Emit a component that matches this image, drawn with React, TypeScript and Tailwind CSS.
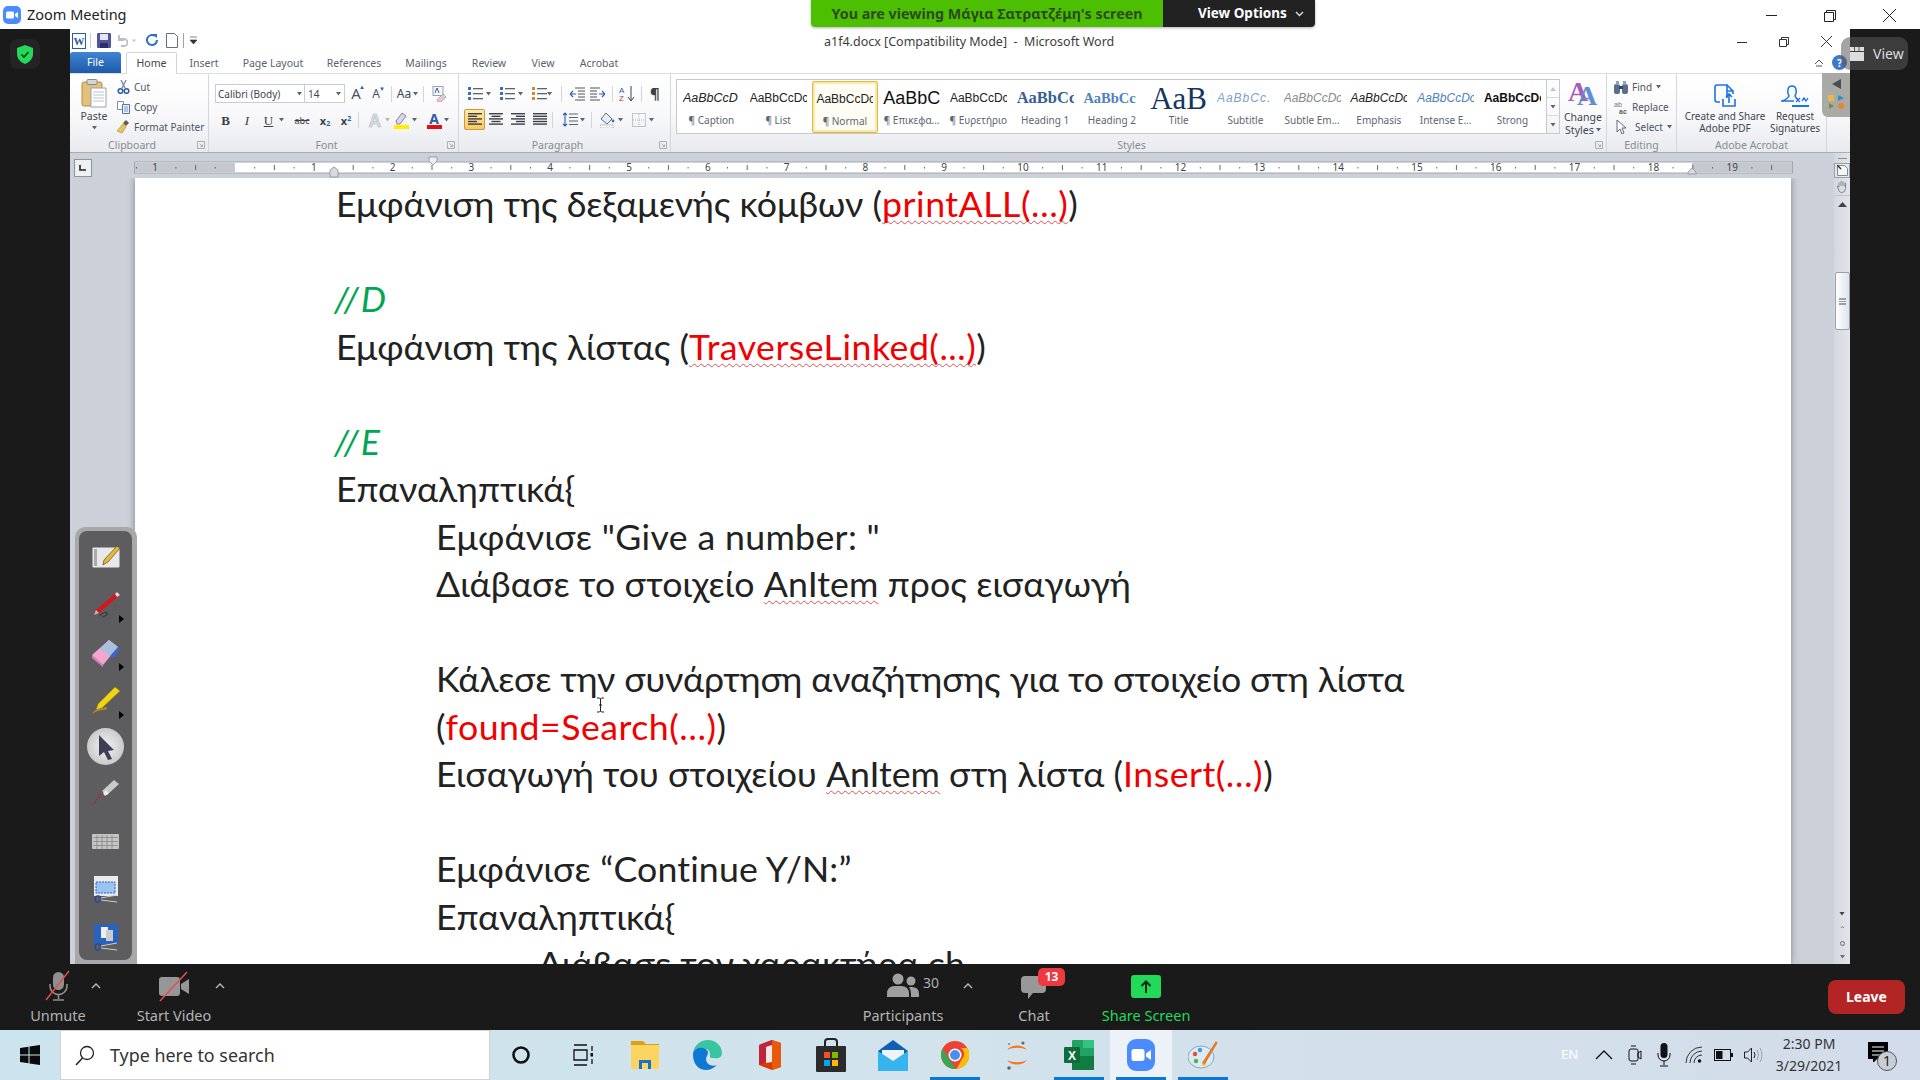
import React from "react";

const C = ({ w = 5, c = "#5a6472" }: { w?: number; c?: string }) => (
  <svg width={w} height="4" viewBox="0 0 5 4" className="shrink-0"><path d="M0 0h5L2.5 3.5z" fill={c} /></svg>
);

const Tab = ({ t, cls }: { t: string; cls: string }) => (
  <div className={`h-[21px] pt-[1px] text-center text-[#59626e] ${cls}`}>{t}</div>
);

const Sep = ({ cls = "h-[18px]" }: { cls?: string }) => <div className={`w-px bg-[#d2d5da] shrink-0 ${cls}`} />;

const Lines = ({ kind }: { kind: "l" | "c" | "r" | "j" }) => {
  const rows = [0, 1, 2, 3, 4];
  return (
    <svg width="14" height="13" viewBox="0 0 14 13">
      {rows.map((i) => {
        const short = i % 2 === 1 && kind !== "j";
        const w = short ? 9 : 14;
        const x = kind === "l" || kind === "j" ? 0 : kind === "c" ? 2.5 : 5;
        return <rect key={i} x={short ? x : 0} y={i * 2.6} width={w} height="1.4" fill="#3b4048" />;
      })}
    </svg>
  );
};

const ListIcon = ({ marker }: { marker: string }) => (
  <svg width="15" height="15" viewBox="0 0 15 15">
    {[1, 6, 11].map((y) => (
      <g key={y}>
        <rect x="0" y={y} width="3" height="3" fill={marker} />
        <rect x="5" y={y + 1} width="10" height="1.3" fill="#5b6470" />
      </g>
    ))}
  </svg>
);

const Style = ({ p, l, cls, sel }: { p: string; l: string; cls: string; sel?: boolean }) => (
  <div className={`w-[66.75px] h-[52px] flex flex-col items-center overflow-hidden shrink-0 ${sel ? "border border-[#e2b64c] bg-[#fffdf3] rounded-[2px] shadow-[inset_0_0_0_2px_#fbe9a6]" : ""}`}>
    <div className={`h-[32px] w-[57px] flex items-center overflow-hidden whitespace-nowrap pt-[3px] ${cls}`}>{p}</div>
    <div className="text-[10px] leading-[14px] text-[#5d6570] whitespace-nowrap">{l}</div>
  </div>
);

const Group = ({ label, cls, children, launcher = true, labelCls = "" }: { label: string; cls: string; children: React.ReactNode; launcher?: boolean; labelCls?: string }) => (
  <div className={`flex flex-col border-r border-[#d3d6db] shrink-0 ${cls}`}>
    <div className="h-[62px] flex flex-col relative">{children}</div>
    <div className="h-[16px] flex items-center relative pt-[3px]">
      <div className={`flex-1 text-center text-[10.5px] text-[#878c93] ${launcher ? "pr-[14px]" : ""} ${labelCls}`}>{label}</div>
      {launcher && (
        <svg width="8" height="8" viewBox="0 0 8 8" className="absolute right-[3px] top-[5px]"><path d="M0.5 0.5h7v7h-7zM2.5 2.5l3 3M5.5 3.5v2h-2" fill="none" stroke="#9aa0a8" strokeWidth="0.8" /></svg>
      )}
    </div>
  </div>
);

const Ribbon = () => (
  <div className="h-[80px] flex bg-gradient-to-b from-white via-[#f9f9fb] to-[#e8eaee] border-t border-[#dcdddf] border-b border-b-[#a9adb3] text-[#4c5561] text-[10px] leading-none font-['Noto_Sans']">
    <Group label="Clipboard" cls="w-[139px]">
      <div className="flex h-full">
        <div className="w-[46px] flex flex-col items-center pt-[5px] pl-[2px]">
          <svg width="26" height="29" viewBox="0 0 26 29">
            <rect x="1" y="3" width="20" height="24" rx="2" fill="#e4c07b" stroke="#b58b45" />
            <rect x="6" y="0.5" width="10" height="5" rx="1" fill="#d5d5d5" stroke="#8b8b8b" />
            <path d="M10 9h15v19H10z" fill="#fff" stroke="#9aa2ad" />
            <path d="M12 13h11M12 16h11M12 19h11M12 22h11" stroke="#b9c4d2" />
          </svg>
          <div className="text-[10.5px] mt-[3px] text-[#3e4650]">Paste</div>
          <div className="mt-[4px]"><C /></div>
        </div>
        <div className="flex flex-col pt-[6px] gap-[6px] ml-[1px]">
          <div className="flex items-center gap-[4px] h-[14px]">
            <svg width="13" height="14" viewBox="0 0 13 14"><path d="M4 0l4 8M9 0L5 8" stroke="#7d8da5" strokeWidth="1.4" /><circle cx="3.5" cy="11" r="2.3" fill="none" stroke="#2f5fa8" strokeWidth="1.6" /><circle cx="9.5" cy="11" r="2.3" fill="none" stroke="#2f5fa8" strokeWidth="1.6" /></svg>
            <span>Cut</span>
          </div>
          <div className="flex items-center gap-[4px] h-[14px]">
            <svg width="13" height="13" viewBox="0 0 13 13"><path d="M0.5 0.5h6v8h-6z" fill="#fff" stroke="#7b8da8" /><path d="M5.5 3.5h7v9h-7z" fill="#eaf1fa" stroke="#4f77ad" /><path d="M7 6h4M7 8h4M7 10h4" stroke="#7b9bc8" /></svg>
            <span>Copy</span>
          </div>
          <div className="flex items-center gap-[4px] h-[14px]">
            <svg width="13" height="14" viewBox="0 0 13 14"><path d="M9 0l3 3-3 3-3-3z" fill="#6b5a3a" /><path d="M6 4l3 3-4 6-5-2z" fill="#e8c65a" stroke="#a58a35" strokeWidth="0.6" /></svg>
            <span className="whitespace-nowrap">Format Painter</span>
          </div>
        </div>
      </div>
    </Group>

    <Group label="Font" cls="w-[250px]">
      <div className="flex items-center h-[19px] mt-[10px] ml-[6px]">
        <div className="w-[90px] h-[19px] bg-white border border-[#c9cdd3] flex items-center justify-between px-[2px]">
          <span className="text-[#3e4650]">Calibri (Body)</span><C />
        </div>
        <div className="w-[40px] h-[19px] bg-white border border-l-0 border-[#c9cdd3] flex items-center justify-between px-[3px]">
          <span className="text-[#3e4650]">14</span><C />
        </div>
        <div className="w-[20px] ml-[1px] text-center text-[15px] text-[#4a5360] relative">A<span className="absolute right-[1px] top-[-2px] text-[6px] text-[#2b5fae]">▲</span></div>
        <div className="w-[20px] text-center text-[12px] text-[#4a5360] relative">A<span className="absolute right-[1px] top-[-2px] text-[6px] text-[#2b5fae]">▼</span></div>
        <Sep cls="h-[16px] ml-[5px]" />
        <div className="w-[31px] flex items-center justify-center gap-[2px] text-[12px] text-[#3e4650]">Aa<C /></div>
        <Sep cls="h-[16px]" />
        <div className="w-[30px] flex justify-center">
          <svg width="15" height="16" viewBox="0 0 15 16"><rect x="1" y="0.5" width="10" height="9" fill="#f4f6f9" stroke="#9aa2ad" /><path d="M3 7l2-5 2 5" fill="none" stroke="#2b5fae" /><path d="M5 14l6-6 3 3-5 5H6z" fill="#ecc6cf" stroke="#8b8fa0" strokeWidth="0.6" /></svg>
        </div>
      </div>
      <div className="flex items-center h-[20px] mt-[7px] ml-[6px] text-[#3a4049]">
        <div className="w-[21px] text-center font-['Liberation_Serif'] font-bold text-[13px]">B</div>
        <div className="w-[22px] text-center font-['Liberation_Serif'] italic text-[13px]">I</div>
        <div className="w-[21px] text-center font-['Liberation_Serif'] underline text-[13px]">U</div>
        <C />
        <div className="w-[24px] ml-[6px] text-center text-[9px] line-through">abc</div>
        <div className="w-[22px] text-center text-[11px] font-bold">x<sub className="text-[7px] text-[#2b5fae]">2</sub></div>
        <div className="w-[20px] text-center text-[11px] font-bold">x<sup className="text-[7px] text-[#2b5fae]">2</sup></div>
        <Sep cls="h-[16px] ml-[2px]" />
        <div className="w-[20px] ml-[6px] text-center text-[17px] font-bold text-[#d8dadd] [-webkit-text-stroke:0.5px_#b5b8bd]">A</div>
        <C c="#b5b8bd" />
        <svg width="16" height="18" viewBox="0 0 16 18" className="ml-[4px]"><path d="M2 10l6-8 4 3-6 8H3z" fill="#d5d9e0" stroke="#7a5ea8" strokeWidth="0.8" /><rect x="0" y="14" width="15" height="4" fill="#fff000" /></svg>
        <div className="ml-[2px]"><C /></div>
        <div className="w-[20px] ml-[7px] flex flex-col items-center">
          <span className="text-[14px] leading-[13px] font-bold text-[#2d5ca8]">A</span>
          <span className="w-[15px] h-[4px] bg-[#e01010]" />
        </div>
        <C />
      </div>
    </Group>

    <Group label="Paragraph" cls="w-[212px]">
      <div className="flex items-center h-[19px] mt-[10px] ml-[9px]">
        <ListIcon marker="#3f70b5" /><div className="ml-[3px] mr-[9px]"><C /></div>
        <ListIcon marker="#3f70b5" /><div className="ml-[3px] mr-[9px]"><C /></div>
        <ListIcon marker="#d08a2a" /><C />
        <Sep cls="h-[16px] ml-[9px]" />
        <div className="ml-[8px] flex gap-[5px]">
          <svg width="15" height="14" viewBox="0 0 15 14"><path d="M5 1h10M8 4h7M8 7h7M8 10h7M5 13h10" stroke="#4c5561" /><path d="M6 7H0M3 4L0 7l3 3" fill="none" stroke="#2b5fae" strokeWidth="1.2" /></svg>
          <svg width="15" height="14" viewBox="0 0 15 14"><path d="M0 1h10M0 4h7M0 7h7M0 10h7M0 13h10" stroke="#4c5561" /><path d="M9 7h6M12 4l3 3-3 3" fill="none" stroke="#2b5fae" strokeWidth="1.2" /></svg>
        </div>
        <Sep cls="h-[16px] ml-[7px]" />
        <svg width="16" height="17" viewBox="0 0 16 17" className="ml-[6px]"><text x="0" y="8" fontSize="8" fill="#2b5fae" fontFamily="Liberation Sans">A</text><text x="0" y="16" fontSize="8" fill="#c0392b" fontFamily="Liberation Sans">Z</text><path d="M12 1v14M9 12l3 4 3-4" fill="none" stroke="#3a4049" /></svg>
        <Sep cls="h-[16px] ml-[6px]" />
        <div className="ml-[8px] text-[15px] font-bold text-[#3a4049]">¶</div>
      </div>
      <div className="flex items-center h-[21px] mt-[6px] ml-[5px]">
        <div className="w-[21px] h-[21px] rounded-[2px] border border-[#c69a3e] bg-gradient-to-b from-[#ffe9a8] to-[#fbc95f] flex items-center justify-center"><Lines kind="l" /></div>
        <div className="w-[22px] flex justify-center"><Lines kind="c" /></div>
        <div className="w-[22px] flex justify-center"><Lines kind="r" /></div>
        <div className="w-[22px] flex justify-center"><Lines kind="j" /></div>
        <Sep cls="h-[16px] ml-[1px]" />
        <div className="ml-[9px] flex items-center gap-[2px]">
          <svg width="16" height="15" viewBox="0 0 16 15"><path d="M3 1v13M1 3l2-2 2 2M1 12l2 2 2-2" fill="none" stroke="#2b5fae" strokeWidth="1.1" /><path d="M7 2h9M7 5.5h9M7 9h9M7 12.5h9" stroke="#5b6470" /></svg>
          <C />
        </div>
        <Sep cls="h-[16px] ml-[6px]" />
        <div className="ml-[8px] flex items-center gap-[3px]">
          <svg width="15" height="16" viewBox="0 0 15 16"><path d="M6 1l6 6-5 5-6-5z" fill="#e8edf4" stroke="#5b6f8c" /><rect x="0" y="13" width="13" height="3" fill="#fff" stroke="#9aa2ad" strokeWidth="0.6" /><circle cx="13" cy="9" r="1.4" fill="#3f70b5" /></svg>
          <C />
        </div>
        <div className="ml-[9px] flex items-center gap-[3px]">
          <svg width="14" height="14" viewBox="0 0 14 14"><rect x="0.5" y="0.5" width="13" height="13" fill="none" stroke="#8d939b" strokeDasharray="1 1" /><path d="M7 1v12M1 7h12" stroke="#b3b7bd" strokeDasharray="1 1" /></svg>
          <C />
        </div>
      </div>
    </Group>

    <Group label="Styles" cls="w-[936px] pl-[5px]" labelCls="pr-[19px]">
      <div className="flex h-full">
        <div className="mt-[5px] h-[55px] border border-[#c6cad0] bg-white flex items-center pl-[1px] w-[871px] shrink-0">
          <Style p="AaBbCcD" l="¶ Caption" cls="text-[12.5px] italic text-[#222] font-['Liberation_Sans']" />
          <Style p="AaBbCcDc" l="¶ List" cls="text-[12px] text-[#222] font-['Liberation_Sans']" />
          <Style p="AaBbCcDc" l="¶ Normal" cls="text-[12px] text-[#222] font-['Liberation_Sans']" sel />
          <Style p="AaBbC" l="¶ Επικεφα..." cls="text-[18px] text-[#111] font-['Liberation_Sans']" />
          <Style p="AaBbCcDc" l="¶ Ευρετήριο" cls="text-[12px] text-[#222] font-['Liberation_Sans']" />
          <Style p="AaBbCc" l="Heading 1" cls="text-[16.5px] font-bold text-[#365f91] font-['Liberation_Serif']" />
          <Style p="AaBbCc" l="Heading 2" cls="text-[14.5px] font-bold text-[#4f81bd] font-['Liberation_Serif']" />
          <Style p="AaB" l="Title" cls="text-[31px] text-[#17365d] font-['Liberation_Serif']" />
          <Style p="AaBbCc." l="Subtitle" cls="text-[12px] italic tracking-[1px] text-[#7f9fc9] font-['Liberation_Sans']" />
          <Style p="AaBbCcDc" l="Subtle Em..." cls="text-[12px] italic text-[#8a8a8a] font-['Liberation_Sans']" />
          <Style p="AaBbCcDc" l="Emphasis" cls="text-[12px] italic text-[#222] font-['Liberation_Sans']" />
          <Style p="AaBbCcDc" l="Intense E..." cls="text-[12px] italic text-[#4f81bd] font-['Liberation_Sans']" />
          <Style p="AaBbCcDc" l="Strong" cls="text-[12px] font-bold text-[#111] font-['Liberation_Sans']" />
        </div>
        <div className="mt-[5px] h-[55px] w-[13px] border border-l-0 border-[#c6cad0] flex flex-col">
          <div className="h-[18px] flex items-center justify-center border-b border-[#d6d9de]"><svg width="6" height="4"><path d="M0 4h6L3 0z" fill="#c3c7cd" /></svg></div>
          <div className="h-[18px] flex items-center justify-center border-b border-[#d6d9de]"><C w={6} /></div>
          <div className="flex-1 flex items-center justify-center"><C w={6} /></div>
        </div>
        <div className="w-[47px] flex flex-col items-center pt-[4px]">
          <svg width="30" height="29" viewBox="0 0 30 29"><text x="0" y="23" fontSize="28" fontWeight="bold" fill="#a85cb8" fontFamily="Liberation Serif">A</text><text x="9" y="27" fontSize="28" fontWeight="bold" fill="#5f8fd0" fontFamily="Liberation Serif">A</text></svg>
          <div className="text-[10.5px] mt-[5px] text-[#3e4650]">Change</div>
          <div className="text-[10.5px] mt-[2px] text-[#3e4650] flex items-center gap-[2px]">Styles<C /></div>
        </div>
      </div>
    </Group>

    <Group label="Editing" cls="w-[70px]" launcher={false}>
      <div className="flex flex-col pt-[6px] pl-[7px] gap-[6px]">
        <div className="flex items-center gap-[4px] h-[14px]">
          <svg width="14" height="13" viewBox="0 0 14 13"><rect x="0" y="3" width="6" height="10" rx="2" fill="#5a6f8f" /><rect x="8" y="3" width="6" height="10" rx="2" fill="#5a6f8f" /><rect x="2" y="0" width="3" height="4" fill="#8da2c0" /><rect x="9" y="0" width="3" height="4" fill="#8da2c0" /><rect x="5" y="5" width="4" height="3" fill="#3a4658" /></svg>
          <span>Find</span><C />
        </div>
        <div className="flex items-center gap-[4px] h-[14px]">
          <svg width="14" height="13" viewBox="0 0 14 13"><text x="0" y="6" fontSize="7" fill="#6b7480" fontFamily="Liberation Sans">ab</text><text x="5" y="13" fontSize="7" fontWeight="bold" fill="#4a6a4a" fontFamily="Liberation Sans">ac</text></svg>
          <span>Replace</span>
        </div>
        <div className="flex items-center gap-[7px] h-[14px]">
          <svg width="14" height="14" viewBox="0 0 14 14"><path d="M3 0v12l3-3 2 5 2-1-2-5h4z" fill="#fff" stroke="#4a5a70" strokeWidth="0.9" /></svg>
          <span className="-mr-[3px]">Select</span><C />
        </div>
      </div>
    </Group>

    <Group label="Adobe Acrobat" cls="w-[150px]" launcher={false}>
      <div className="flex h-full pl-[7px]">
        <div className="w-[82px] flex flex-col items-center pt-[10px]">
          <svg width="22" height="24" viewBox="0 0 22 24"><path d="M13 14V1H3a2 2 0 0 0-2 2v13a2 2 0 0 0 2 2h3M13 1l6 6v3M13 1v6h6" fill="none" stroke="#1a73e8" strokeWidth="1.6" /><path d="M9 15v7h12v-7M15 19v-9M12 13l3-3 3 3" fill="none" stroke="#1a73e8" strokeWidth="1.6" /></svg>
          <div className="text-[10px] mt-[3px] whitespace-nowrap text-[#3e4650]">Create and Share</div>
          <div className="text-[10px] mt-[2px] text-[#3e4650]">Adobe PDF</div>
        </div>
        <div className="w-[58px] flex flex-col items-center pt-[10px]">
          <svg width="30" height="24" viewBox="0 0 30 24"><path d="M2 17c4-1 6-3 7-5-2-3-2-10 3-10s5 7 3 10c1 2 2 3 3 3" fill="none" stroke="#1a73e8" strokeWidth="1.5" /><path d="M1 17h13M16 14l4 4M20 14l-4 4M22 17l2-3 2 3 2-3" fill="none" stroke="#1a73e8" strokeWidth="1.3" /><rect x="12" y="21" width="17" height="2" fill="#1a73e8" /></svg>
          <div className="text-[10px] mt-[3px] text-[#3e4650]">Request</div>
          <div className="text-[10px] mt-[2px] text-[#3e4650]">Signatures</div>
        </div>
      </div>
    </Group>
    <div className="flex-1 relative">
      <div className="absolute left-[-5px] top-[-1px] w-[28px] h-[44px] bg-[#a9aaa5] rounded-bl-[6px] flex flex-col items-center pt-[6px] gap-[5px]">
        <svg width="9" height="10"><path d="M9 0v10L0 5z" fill="#4a4d50" /></svg>
        <svg width="18" height="16" viewBox="0 0 18 16"><rect x="1" y="1" width="6" height="6" fill="#e6b84a" /><path d="M11 1l6 3-6 3z" fill="#2f8fc4" /><path d="M2 9l5 3-5 3z" fill="#7d8a3a" /><circle cx="14" cy="12" r="3" fill="#e8862a" /></svg>
      </div>
    </div>
  </div>
);

const Ruler = () => {
  const nums = Array.from({ length: 19 }, (_, i) => i + 1);
  const ticks = Array.from({ length: 84 }, (_, i) => i);
  return (
    <div className="h-[25px] bg-[#ccd1d9] flex items-start">
      <div className="w-[18px] h-[18px] ml-[4px] mt-[6px] border border-[#8f949b] bg-[#eef0f3] flex items-center justify-center shrink-0">
        <svg width="8" height="8"><path d="M1 1v5h6" fill="none" stroke="#222" strokeWidth="1.6" /></svg>
      </div>
      <svg width="1659" height="25" viewBox="0 0 1659 25" className="ml-[42px] shrink-0">
        <rect x="0.5" y="9" width="1658" height="11" fill="#fff" stroke="#a2a7ae" />
        <rect x="1" y="9.5" width="100" height="10" fill="#c5c9cf" />
        <rect x="1558" y="9.5" width="100" height="10" fill="#c5c9cf" />
        {ticks.map((i) => {
          const x = 2 + i * 19.7;
          const t = i % 4;
          if (t === 1) return null;
          return t === 3 ? <rect key={i} x={x} y="12" width="1" height="5" fill="#666" /> : <rect key={i} x={x} y="14" width="1" height="1.5" fill="#666" />;
        })}
        <text x="21" y="18" fontSize="10" fill="#444" textAnchor="middle" fontFamily="Noto Sans">1</text>
        {nums.map((n) => (
          <text key={n} x={101 + n * 78.8} y="18" fontSize="10" fill="#444" textAnchor="middle" fontFamily="Noto Sans">{n}</text>
        ))}
        <path d="M200 14l4 3v7h-8v-7z" fill="#d7dadf" stroke="#8c9097" strokeWidth="0.8" />
        <path d="M295 4h8v4l-4 4-4-4z" fill="#eceef1" stroke="#8c9097" strokeWidth="0.8" />
        <path d="M1558 15l4 4v2h-8v-2z" fill="#d7dadf" stroke="#8c9097" strokeWidth="0.8" />
      </svg>
    </div>
  );
};

const Sq = ({ children }: { children: React.ReactNode }) => (
  <span className="underline decoration-wavy decoration-[#e05050] decoration-1 underline-offset-[3px] [text-decoration-skip-ink:none]">{children}</span>
);
const R = ({ children }: { children: React.ReactNode }) => <span className="text-[#f00000] tracking-[0.5px]">{children}</span>;
const G = ({ children }: { children: React.ReactNode }) => <div className="h-[47.5px] italic text-[#00a651] tracking-[2px] -ml-[2px]">{children}</div>;
const L = ({ children, cls = "" }: { children?: React.ReactNode; cls?: string }) => <div className={`h-[47.5px] whitespace-nowrap ${cls}`}>{children}</div>;

const Doc = () => (
  <div className="flex-1 bg-[#ccd1d9] flex overflow-hidden pl-[65px] pr-[43px]">
    <div className="flex-1 bg-white shadow-[0_0_7px_rgba(60,60,70,0.55)] pl-[201px] pt-[2px] text-[#222] text-[35.7px] leading-[47.5px] font-['Lato','Noto_Sans',sans-serif] relative">
      <L>Εμφάνιση της δεξαμενής κόμβων (<R><Sq>printALL(…)</Sq></R>)</L>
      <L />
      <G>//D</G>
      <L>Εμφάνιση της λίστας (<R><Sq>TraverseLinked(...)</Sq></R>)</L>
      <L />
      <G>//E</G>
      <L>Επαναληπτικά{"{"}</L>
      <L cls="pl-[100px] tracking-[0.33px]">Εμφάνισε "Give a number: "</L>
      <L cls="pl-[100px] tracking-[0.1px]">Διάβασε το στοιχείο <Sq>AnItem</Sq> προς εισαγωγή</L>
      <L />
      <L cls="pl-[100px] tracking-[-0.13px]">Κάλεσε την συνάρτηση αναζήτησης για το στοιχείο στη λίστα</L>
      <L cls="pl-[100px]">(<R>found=Search(…)</R>)</L>
      <L cls="pl-[100px]">Εισαγωγή του στοιχείου <Sq>AnItem</Sq> στη λίστα (<R>Insert(…)</R>)</L>
      <L />
      <L cls="pl-[100px] tracking-[0.15px]">Εμφάνισε “Continue Y/N:”</L>
      <L cls="pl-[100px]">Επαναληπτικά{"{"}</L>
      <L cls="pl-[202px]">Διάβασε τον χαρακτήρα ch</L>
      <svg width="9" height="16" viewBox="0 0 9 16" className="absolute left-[461px] top-[519px]"><path d="M1 1h2.5l1 1 1-1H8M4.5 2v12M1 15h2.5l1-1 1 1H8M3 8h3" fill="none" stroke="#222" strokeWidth="1" /></svg>
    </div>
  </div>
);

const Scrollbar = () => (
  <div className="w-[16px] bg-[#d9dde3] flex flex-col items-center shrink-0 bg-gradient-to-r from-[#d4d8de] to-[#e2e5ea]">
    <div className="h-[10px] w-full flex items-center justify-center"><div className="w-[9px] h-px bg-[#8b9098]" /></div>
    <div className="h-[15px] w-[16px] border border-[#9aa0a8] bg-[#e4e6ea] flex items-center justify-center">
      <svg width="11" height="11" viewBox="0 0 11 11"><path d="M0.5 0.5h7l3 3v7h-10z" fill="#f4f5f6" stroke="#888" /><path d="M0 0l4 4" stroke="#333" strokeWidth="1.4" /></svg>
    </div>
    <div className="h-[17px] flex items-center">
      <svg width="12" height="13" viewBox="0 0 12 13"><path d="M3 7V2.5M5 6V1M7 6V1.3M9 7V2.5M3 7L1.3 6 3 11q1 1.5 3 1.5 3.5 0 3.5-4V3" fill="none" stroke="#858a92" strokeWidth="1" /></svg>
    </div>
    <div className="h-px w-full bg-[#c3c7cd]" />
    <div className="h-[16px] flex items-center"><svg width="9" height="5"><path d="M0 5h9L4.5 0z" fill="#3e4248" /></svg></div>
    <div className="h-[60px]" />
    <div className="w-[15px] h-[58px] border border-[#9aa0a8] rounded-[2px] bg-gradient-to-r from-white to-[#dfe3ea] flex items-center justify-center">
      <div className="w-[7px] h-[7px] border-y-2 border-[#9aa0a8] relative after:absolute after:left-0 after:right-0 after:top-[1px] after:h-px after:bg-[#9aa0a8]" />
    </div>
    <div className="flex-1" />
    <div className="h-[17px] flex items-center"><C w={6} c="#3e4248" /></div>
    <div className="h-[14px] flex items-center text-[8px] leading-none text-[#6a6f77]">⌃</div>
    <div className="h-[14px] flex items-center"><div className="w-[5px] h-[5px] rounded-full border border-[#6a6f77]" /></div>
    <div className="h-[14px] flex items-center"><C w={5} c="#6a6f77" /></div>
  </div>
);

const Tb = ({ children, sel, under }: { children: React.ReactNode; sel?: boolean; under?: boolean }) => (
  <div className={`w-[62px] h-[50px] shrink-0 relative flex items-center justify-center ${sel ? "bg-[#ecf2f8]" : ""}`}>
    {children}
    {under && <div className="absolute bottom-0 left-[6px] right-[6px] h-[3px] bg-[#0a78d4]" />}
  </div>
);

const BarBtn = ({ label, cls, children, text = "text-[#b3b3b3]" }: { label: string; cls: string; children: React.ReactNode; text?: string }) => (
  <div className={`flex flex-col items-center shrink-0 ${cls}`}>
    <div className="h-[32px] flex items-end justify-center relative">{children}</div>
    <div className={`mt-[4px] text-[14.5px] leading-[18px] whitespace-nowrap ${text}`}>{label}</div>
  </div>
);

const Caret = ({ cls = "" }: { cls?: string }) => (
  <svg width="10" height="6" viewBox="0 0 10 6" className={cls}><path d="M1 5l4-4 4 4" fill="none" stroke="#b9b9b9" strokeWidth="1.4" /></svg>
);

const ZoomBar = () => (
  <div className="h-[66px] bg-[#1a1a1a] flex items-start font-['Noto_Sans'] shrink-0">
    <BarBtn label="Unmute" cls="w-[56px] ml-[30px] mt-[6px]">
      <svg width="28" height="32" viewBox="0 0 28 32">
        <rect x="9" y="2" width="11" height="18" rx="5.5" fill="#8f8f8f" />
        <path d="M6 14v2a8.5 8.5 0 0 0 17 0v-2M14.5 24v5M9 30h11" fill="none" stroke="#8f8f8f" strokeWidth="1.6" />
        <path d="M2 30L25 1" stroke="#e84c4c" strokeWidth="1.4" />
      </svg>
    </BarBtn>
    <Caret cls="ml-[5px] mt-[19px]" />
    <BarBtn label="Start Video" cls="w-[76px] ml-[35px] mt-[6px]">
      <svg width="32" height="32" viewBox="0 0 32 32">
        <rect x="1" y="7" width="21" height="19" rx="3" fill="#969696" />
        <path d="M23 14l8-5v15l-8-5z" fill="#969696" />
        <path d="M2 31L29 2" stroke="#e84c4c" strokeWidth="1.5" />
      </svg>
    </BarBtn>
    <Caret cls="ml-[3px] mt-[19px]" />
    <BarBtn label="Participants" cls="w-[80px] ml-[638px] mt-[6px]">
      <svg width="32" height="24" viewBox="0 0 32 24" className="mb-[5px]">
        <circle cx="11" cy="6" r="5.5" fill="#a0a0a0" /><circle cx="24" cy="8" r="4.5" fill="#a0a0a0" />
        <path d="M0 24v-3q0-8 8-8h6q8 0 8 8v3zM24 24v-3q0-4-2-7h3q7 0 7 7v3z" fill="#a0a0a0" />
      </svg>
    </BarBtn>
    <div className="text-[14px] leading-[18px] text-[#a9b0b8] ml-[-20px] mt-[10px]">30</div>
    <Caret cls="ml-[24px] mt-[19px]" />
    <BarBtn label="Chat" cls="w-[34px] ml-[44px] mt-[6px]">
      <svg width="28" height="28" viewBox="0 0 28 28" className="mb-[2px]"><path d="M5 4h17a4 4 0 0 1 4 4v9a4 4 0 0 1-4 4h-9l-5 6v-6H5a4 4 0 0 1-4-4V8a4 4 0 0 1 4-4z" fill="#989898" /></svg>
      <div className="absolute left-[18px] top-[-2px] w-[27px] h-[18px] bg-[#f0383f] rounded-[5px] text-white text-[12px] leading-[18px] font-bold text-center">13</div>
    </BarBtn>
    <BarBtn label="Share Screen" cls="w-[88px] ml-[51px] mt-[6px]" text="text-[#23d959]">
      <div className="w-[30px] h-[23px] bg-[#23d959] rounded-[3px] flex items-center justify-center mb-[4px]">
        <svg width="12" height="14" viewBox="0 0 12 14"><path d="M6 13V2M1.5 6L6 1.5 10.5 6" fill="none" stroke="#0d2a14" strokeWidth="2" /></svg>
      </div>
    </BarBtn>
    <div className="flex-1 flex justify-end pr-[15px] pt-[16px]">
      <div className="w-[77px] h-[34px] bg-[#b32525] rounded-[8px] text-white font-bold text-[14px] leading-[34px] text-center">Leave</div>
    </div>
  </div>
);

const Taskbar = () => (
  <div className="h-[50px] shrink-0 flex bg-gradient-to-r from-[#cce4ee] via-[#d2e3ec] to-[#d3dcea] font-['Noto_Sans']">
    <div className="w-[60px] flex items-center justify-center">
      <svg width="20" height="20" viewBox="0 0 20 20"><path d="M0 3l8.5-1.2V9.5H0zM9.5 1.6L20 0v9.5H9.5zM0 10.5h8.5v7.7L0 17zM9.5 10.5H20V20L9.5 18.4z" fill="#0b0b0b" /></svg>
    </div>
    <div className="w-[430px] bg-white border border-[#cfd3d6] flex items-center pl-[14px] gap-[15px]">
      <svg width="20" height="21" viewBox="0 0 20 21"><circle cx="12" cy="8" r="6.5" fill="none" stroke="#222" strokeWidth="1.3" /><path d="M7.5 13L1 20" stroke="#222" strokeWidth="1.5" /></svg>
      <span className="text-[17.9px] text-[#333]">Type here to search</span>
    </div>
    <Tb><svg width="20" height="20"><circle cx="10" cy="10" r="7.5" fill="none" stroke="#111" strokeWidth="2.6" /></svg></Tb>
    <Tb><svg width="20" height="22" viewBox="0 0 20 22"><path d="M1 1h13M1 21h13M1 6h13v10H1zM19 2v5M19 15v5" fill="none" stroke="#111" strokeWidth="1.3" /><rect x="17.5" y="9" width="3" height="3.5" fill="#111" /></svg></Tb>
    <Tb><svg width="28" height="30" viewBox="0 0 28 30"><path d="M0 1h12l3 3h13v7H0z" fill="#e0a010" /><rect y="5" width="28" height="24" fill="#fcd462" /><path d="M8 29v-9h12v9h-3v-6h-6v6z" fill="#1a73c8" /></svg></Tb>
    <Tb><svg width="32" height="32" viewBox="0 0 32 32"><path d="M2 16C2 7 9 1 17 1c8 0 14 6 14 13 0 5-5 6-9 5-4 0-3-2-3-4 0-4-4-6-8-5-5 1-8 4-9 6z" fill="#37c6a0" /><path d="M2 16c0-5 5-8 10-7 5 1 6 5 4 8-2 3-1 7 3 9 2 1 5 1 7 0-3 3-7 5-11 5C8 31 2 25 2 16z" fill="#0f78d4" /></svg></Tb>
    <Tb><svg width="26" height="32" viewBox="0 0 26 32"><path d="M16 1L3 6v20l13 5 9-3V4z" fill="#d83b01" /><path d="M16 1L3 6v20l7-3V8l6-2z" fill="#c2243c" /><path d="M10 8v16l6-1V6z" fill="#f4e8e4" /><path d="M16 1v30l9-3V4z" fill="#e8590c" /></svg></Tb>
    <Tb><svg width="30" height="34" viewBox="0 0 30 34"><path d="M9 9V4a3 3 0 0 1 3-3h6a3 3 0 0 1 3 3v5" fill="none" stroke="#222" strokeWidth="2" /><rect y="8" width="30" height="26" rx="1" fill="#2b2b2b" /><rect x="8" y="14" width="6" height="6" fill="#f25022" /><rect x="16" y="14" width="6" height="6" fill="#7fba00" /><rect x="8" y="22" width="6" height="6" fill="#00a4ef" /><rect x="16" y="22" width="6" height="6" fill="#ffb900" /></svg></Tb>
    <Tb><svg width="30" height="32" viewBox="0 0 30 32"><path d="M0 12L15 1l15 11v20H0z" fill="#0f5fb5" /><path d="M4 11h22v10l-11 7-11-7z" fill="#eef4fa" /><path d="M0 12l15 10 15-10v20H0z" fill="#36b4ee" /></svg></Tb>
    <Tb under><svg width="28" height="28" viewBox="0 0 28 28"><circle cx="14" cy="14" r="14" fill="#eb4335" /><path d="M14 7h12.5a14 14 0 0 1-11 21L21 18a7 7 0 0 0-1-11z" fill="#fbbc05" /><path d="M1.8 7.5L8 18l7 10A14 14 0 0 1 1.8 7.5z" fill="#34a853" /><circle cx="14" cy="14" r="6.5" fill="#fff" /><circle cx="14" cy="14" r="5" fill="#4a8ef0" /></svg></Tb>
    <Tb><svg width="24" height="32" viewBox="0 0 24 32"><path d="M2 11c4-6 16-6 20 0-5-3-15-3-20 0zM2 21c4 6 16 6 20 0-5 3-15 3-20 0z" fill="#f37726" /><circle cx="18" cy="4" r="1.6" fill="#666" /><circle cx="4" cy="5" r="1.1" fill="#888" /><circle cx="4" cy="29" r="1.8" fill="#666" /></svg></Tb>
    <Tb under><svg width="30" height="32" viewBox="0 0 30 32"><rect x="8" y="1" width="22" height="30" rx="1" fill="#21a366" /><rect x="19" y="1" width="11" height="8" fill="#33c481" /><rect x="8" y="17" width="22" height="14" fill="#107c41" /><rect y="8" width="16" height="16" rx="1" fill="#0e6b3a" /><text x="8" y="20.5" fontSize="12" fontWeight="bold" fill="#fff" textAnchor="middle" fontFamily="Liberation Sans">X</text></svg></Tb>
    <Tb sel under><svg width="28" height="32" viewBox="0 0 28 32"><rect width="28" height="32" rx="9" fill="#4a8cff" /><rect x="4.5" y="10" width="13" height="12" rx="2.5" fill="#fff" /><path d="M19 14.5l5-3.5v10l-5-3.5z" fill="#fff" /></svg></Tb>
    <Tb under><svg width="30" height="30" viewBox="0 0 30 30"><ellipse cx="13" cy="17" rx="13" ry="11" fill="#dbe9f2" stroke="#8aa8bd" /><circle cx="7" cy="14" r="2.2" fill="#e54b3c" /><circle cx="12" cy="10" r="2.2" fill="#3f9ce0" /><circle cx="8" cy="21" r="2.2" fill="#52b04a" /><circle cx="16" cy="24" r="2" fill="#f2c230" /><path d="M28 1l1.5 2L17 24l-3-1z" fill="#e07a28" /></svg></Tb>
    <div className="flex-1 flex items-center pl-[327px]">
      <span className="text-[13px] text-white">EN</span>
      <svg width="18" height="10" viewBox="0 0 18 10" className="ml-[17px]"><path d="M1 9l8-8 8 8" fill="none" stroke="#111" strokeWidth="1.3" /></svg>
      <svg width="14" height="22" viewBox="0 0 14 22" className="ml-[15px]"><rect x="1" y="5" width="9" height="12" rx="2" fill="none" stroke="#111" /><path d="M10 9l3-2v8l-3-2zM3 2h5M3 20h5" fill="none" stroke="#111" /></svg>
      <svg width="14" height="24" viewBox="0 0 14 24" className="ml-[15px]"><rect x="3.5" y="0" width="7" height="15" rx="3.5" fill="#111" /><path d="M1 10v2a6 6 0 0 0 12 0v-2M7 18v4M3 23h8" fill="none" stroke="#111" /></svg>
      <svg width="18" height="18" viewBox="0 0 18 18" className="ml-[14px]"><path d="M1 17A16 16 0 0 1 17 1M5 17A12 12 0 0 1 17 5M9 17a8 8 0 0 1 8-8" fill="none" stroke="#333" /><circle cx="14.5" cy="15" r="1.8" fill="#111" /></svg>
      <svg width="19" height="12" viewBox="0 0 19 12" className="ml-[11px]"><rect x="0.5" y="0.5" width="16" height="11" fill="none" stroke="#111" /><rect x="2" y="2" width="6.5" height="8" fill="#111" /><rect x="17" y="4" width="2" height="4" fill="#111" /></svg>
      <svg width="20" height="18" viewBox="0 0 20 18" className="ml-[11px]"><path d="M0.5 6h3l4-4v14l-4-4h-3z" fill="none" stroke="#222" /><path d="M10 6q2 3 0 6" fill="none" stroke="#222" /><path d="M13 4q3 5 0 10M16 2q4 7 0 14" fill="none" stroke="#9a9fa6" /></svg>
      <div className="w-[76px] ml-[7px] flex flex-col items-center text-[14px] leading-[22px] text-[#333] shrink-0"><span>2:30 PM</span><span className="whitespace-nowrap">3/29/2021</span></div>
      <div className="relative ml-[21px] w-[24px] h-[26px] shrink-0">
        <svg width="20" height="20" viewBox="0 0 20 20"><path d="M0 0h20v17H9l-4 4v-4H0z" fill="#000" /><path d="M4 5h12M4 9h12M4 13h9" stroke="#fff" /></svg>
        <div className="absolute left-[9px] top-[9px] w-[20px] h-[20px] rounded-full border border-[#555] bg-[#c9ced6] text-[14px] leading-[18px] text-center text-[#222]">1</div>
      </div>
    </div>
  </div>
);

const TI = ({ children }: { children: React.ReactNode }) => <div className="h-[48px] flex items-center justify-center shrink-0 relative w-full">{children}</div>;
const Arrow = () => <div className="absolute right-[8px] bottom-[6px] w-0 h-0 border-y-[4px] border-y-transparent border-l-[5px] border-l-black" />;

const Annot = () => (
  <div className="absolute left-[75px] top-[527px] w-[62px] h-[437px] bg-[#a8a8aa] rounded-t-[10px] p-[4px] pr-[5px]">
    <div className="w-full h-full bg-[#5d5c5e] rounded-[8px] flex flex-col items-center pt-[2px]">
      <TI>
        <svg width="28" height="22" viewBox="0 0 28 22"><rect x="0.5" y="1.5" width="27" height="20" rx="1" fill="#e8e8e8" /><rect x="2" y="3" width="3" height="17" fill="#aaa" /><path d="M25 0l3 2-12 14-5 3 1-5z" fill="#e8b830" stroke="#333" strokeWidth="0.6" /></svg>
      </TI>
      <TI>
        <svg width="30" height="28" viewBox="0 0 30 28"><path d="M26 1l3 3L8 22l-5 2 2-5z" fill="#d8141c" /><path d="M26 1l3 3-3 2-2-3z" fill="#ddd" /><path d="M3 24l2-5 3 3z" fill="#bbb" /><path d="M8 25q6-5 8-3t-5 4" fill="none" stroke="#3c3c3c" strokeWidth="1.2" /></svg>
        <Arrow />
      </TI>
      <TI>
        <svg width="30" height="30" viewBox="0 0 30 30"><path d="M1 17L18 2l9 7-15 18z" fill="#f3a6cf" /><path d="M9 11L18 2l9 7-8 9z" fill="#a8c0dc" /><path d="M19 18l8-9 2 3-8 9z" fill="#3f66d0" /><path d="M1 17l11 10v2L1 20z" fill="#e77fb5" /></svg>
        <Arrow />
      </TI>
      <TI>
        <svg width="30" height="30" viewBox="0 0 30 30"><path d="M24 1l5 4L11 22l-6 2 2-6z" fill="#f2d312" stroke="#8a7a10" strokeWidth="0.5" /><path d="M1 28q6-4 12-4 5-1 2-3l-6 2q-7 1-8 5z" fill="#b08a2a" /></svg>
        <Arrow />
      </TI>
      <div className="w-[37px] h-[37px] rounded-full bg-radial from-[#f3f3f3] to-[#b9b9bb] flex items-center justify-center shrink-0 mt-[3px] mb-[4px]">
        <svg width="20" height="26" viewBox="0 0 20 26"><path d="M3 1l15 15-6 1 4 8-4 1-4-8-5 4z" fill="#3e3e54" /></svg>
      </div>
      <TI>
        <svg width="28" height="28" viewBox="0 0 28 28"><path d="M22 1l5 4-12 11-5-4z" fill="#c9c9c9" /><path d="M14 11l3 3-4 3-2-3z" fill="#eee" /><path d="M9 15L1 26" stroke="#b22" strokeWidth="1.2" strokeDasharray="2 1" /></svg>
      </TI>
      <TI>
        <svg width="27" height="15" viewBox="0 0 27 15"><rect width="27" height="15" rx="1" fill="#c4c4c4" /><path d="M1 3.5h25M1 7.5h25M1 11.5h25M5 1v14M10 1v14M15 1v14M20 1v14" stroke="#777" strokeWidth="0.6" /></svg>
      </TI>
      <TI>
        <svg width="26" height="27" viewBox="0 0 26 27"><rect x="1" y="0" width="24" height="20" fill="#eaeaea" /><rect x="3" y="6" width="19" height="11" fill="#9cc4f0" stroke="#2a5fd0" strokeDasharray="2 1" /><circle cx="5" cy="23" r="3" fill="none" stroke="#2a4aa0" strokeWidth="1.4" /><path d="M8 22l16-3M8 24l16 2" stroke="#ccc" /></svg>
      </TI>
      <TI>
        <svg width="26" height="27" viewBox="0 0 26 27"><rect x="1" y="0" width="24" height="20" fill="#2a62c0" /><path d="M8 3h7v11H8z" fill="#eee" /><path d="M13 6h7v11h-7z" fill="#ccc" /><circle cx="5" cy="23" r="3" fill="none" stroke="#2a4aa0" strokeWidth="1.4" /><path d="M8 22l16-3M8 24l16 2" stroke="#ccc" /></svg>
      </TI>
    </div>
  </div>
);

const Word = () => (
  <div className="flex-1 min-w-0 flex flex-col bg-white">
    <div className="h-[23px] flex items-center pl-[2px] relative shrink-0">
      <svg width="14" height="16" viewBox="0 0 14 16"><rect x="0.5" y="0.5" width="13" height="15" fill="#fff" stroke="#2a5aa8" /><text x="7" y="12" fontSize="11" fontWeight="bold" fill="#2a5aa8" textAnchor="middle" fontFamily="Liberation Serif">W</text></svg>
      <div className="w-px h-[15px] bg-[#c8ccd2] ml-[4px]" />
      <svg width="14" height="15" viewBox="0 0 14 15" className="ml-[6px]"><rect width="14" height="15" rx="1" fill="#55539a" /><rect x="3" y="1" width="8" height="6" fill="#e4e6f0" /><rect x="3" y="10" width="8" height="5" fill="#2e2c70" /></svg>
      <svg width="12" height="13" viewBox="0 0 12 13" className="ml-[5px]"><path d="M3 5h5a3 3 0 0 1 0 7H5M3 1v5h5" fill="none" stroke="#b9bec6" strokeWidth="1.8" /></svg>
      <div className="ml-[4px]"><C w={4} c="#c3c6cb" /></div>
      <svg width="13" height="13" viewBox="0 0 13 13" className="ml-[10px]"><path d="M11 6a5 5 0 1 1-2-4" fill="none" stroke="#2f6fc4" strokeWidth="2" /><path d="M6 0h5v4z" fill="#2f6fc4" /></svg>
      <svg width="12" height="15" viewBox="0 0 12 15" className="ml-[7px]"><path d="M0.5 0.5h8l3 3v11h-11z" fill="#fff" stroke="#66707c" /></svg>
      <div className="w-px h-[15px] bg-[#9fa4ab] ml-[5px]" />
      <svg width="7" height="9" viewBox="0 0 7 9" className="ml-[6px]"><path d="M0 1h7M0 4h7l-3.5 4z" fill="#333" stroke="#333" strokeWidth="0.6" /></svg>
      <div className="absolute left-[754px] top-[6px] text-[12.5px] leading-[14px] text-[#3d3d3d] whitespace-pre font-['Noto_Sans']">a1f4.docx [Compatibility Mode]  -  Microsoft Word</div>
      <div className="absolute left-[1667px] top-[7px] flex items-center gap-[32px]">
        <svg width="10" height="10"><path d="M0 5.5h10" stroke="#333" /></svg>
        <svg width="10" height="10"><path d="M0.5 2.5h7v7h-7zM2.5 2.5v-2h7v7h-2" fill="none" stroke="#333" /></svg>
        <svg width="11" height="11"><path d="M0 0l11 11M11 0L0 11" stroke="#333" /></svg>
      </div>
    </div>
    <div className="h-[21px] flex items-end text-[10.5px] leading-[21px] font-['Noto_Sans'] relative shrink-0">
      <div className="w-[51px] h-[21px] bg-gradient-to-b from-[#3f84d4] to-[#1d5aa8] rounded-t-[3px] text-white text-center">File</div>
      <div className="w-[51px] h-[22px] ml-[5px] -mb-px bg-white border border-b-0 border-[#d3d5d9] rounded-t-[2px] text-center text-[#444] relative z-10">Home</div>
      <Tab t="Insert" cls="w-[54px]" />
      <Tab t="Page Layout" cls="w-[84px]" />
      <Tab t="References" cls="w-[78px]" />
      <Tab t="Mailings" cls="w-[66px]" />
      <Tab t="Review" cls="w-[60px]" />
      <Tab t="View" cls="w-[48px]" />
      <Tab t="Acrobat" cls="w-[64px]" />
      <svg width="10" height="8" viewBox="0 0 10 8" className="absolute left-[1744px] top-[7px]"><path d="M1 5l4-4 4 4M2 7h6" fill="none" stroke="#555" /></svg>
      <div className="absolute left-[1762px] top-[3px] w-[15px] h-[15px] rounded-full bg-[#3f78c8] text-white text-[11px] leading-[15px] font-bold text-center">?</div>
    </div>
    <Ribbon />
    <div className="flex-1 min-h-0 flex">
      <div className="flex-1 min-w-0 flex flex-col">
        <Ruler />
        <Doc />
      </div>
      <Scrollbar />
    </div>
  </div>
);

export default function App() {
  return (
    <div className="w-[1920px] h-[1080px] relative overflow-hidden flex flex-col bg-white">
      <div className="h-[29px] shrink-0 flex items-center relative font-['Noto_Sans']">
        <svg width="18" height="18" viewBox="0 0 18 18" className="ml-[3px]"><rect width="18" height="18" rx="5" fill="#4a8cff" /><rect x="3" y="5.5" width="8" height="7" rx="1.5" fill="#fff" /><path d="M12 8l3-2v6l-3-2z" fill="#fff" /></svg>
        <span className="ml-[6px] text-[14.5px] text-[#222]">Zoom Meeting</span>
        <div className="absolute left-[1766px] top-[9px] flex items-center gap-[47px]">
          <svg width="11" height="11"><path d="M0 5.5h11" stroke="#222" /></svg>
          <svg width="12" height="12"><path d="M0.5 2.5h9v9h-9zM2.5 2.5v-2h9v9h-2" fill="none" stroke="#222" /></svg>
          <svg width="13" height="13"><path d="M0 0l13 13M13 0L0 13" stroke="#222" /></svg>
        </div>
      </div>
      <div className="flex-1 min-h-0 flex">
        <div className="w-[70px] bg-[#1a1a1a] shrink-0 pl-[10px] pt-[10px]">
          <div className="w-[30px] h-[30px] rounded-[8px] bg-[#242424] flex items-center justify-center">
            <svg width="16" height="19" viewBox="0 0 16 19"><path d="M8 0l8 3v6c0 5-4 8.5-8 10C4 17.5 0 14 0 9V3z" fill="#23d959" /><path d="M4.5 9.5l2.5 2.5 4.5-5" fill="none" stroke="#0c3a1a" strokeWidth="1.6" /></svg>
          </div>
        </div>
        <Word />
        <div className="w-[70px] bg-[#1a1a1a] shrink-0" />
      </div>
      <ZoomBar />
      <Taskbar />
      <Annot />
      <div className="absolute left-[811px] top-0 w-[504px] h-[27px] flex rounded-b-[4px] overflow-hidden font-['Noto_Sans'] shadow-[0_1px_3px_rgba(0,0,0,0.3)]">
        <div className="w-[352px] bg-[#4cc000] text-[#2c4a22] font-bold text-[14.3px] leading-[27px] text-center whitespace-nowrap">You are viewing Μάγια Σατρατζέμη's screen</div>
        <div className="flex-1 bg-[#222] text-white font-bold text-[13.5px] flex items-center pl-[35px] gap-[8px] whitespace-nowrap">
          View Options
          <svg width="9" height="6" viewBox="0 0 9 6"><path d="M1 1l3.5 3.5L8 1" fill="none" stroke="#ddd" strokeWidth="1.4" /></svg>
        </div>
      </div>
      <div className="absolute left-[1841px] top-[37px] w-[67px] h-[33px] rounded-[9px] bg-[rgba(90,90,90,0.55)] flex items-center pl-[9px] gap-[9px] font-['Noto_Sans']">
        <svg width="14" height="14" viewBox="0 0 14 14"><rect width="14" height="4" fill="#ddd" /><rect y="5" width="14" height="9" fill="#ddd" /><path d="M4.5 0v4M9 0v4" stroke="#555" /></svg>
        <span className="text-[14px] text-[#ddd]">View</span>
      </div>
    </div>
  );
}
